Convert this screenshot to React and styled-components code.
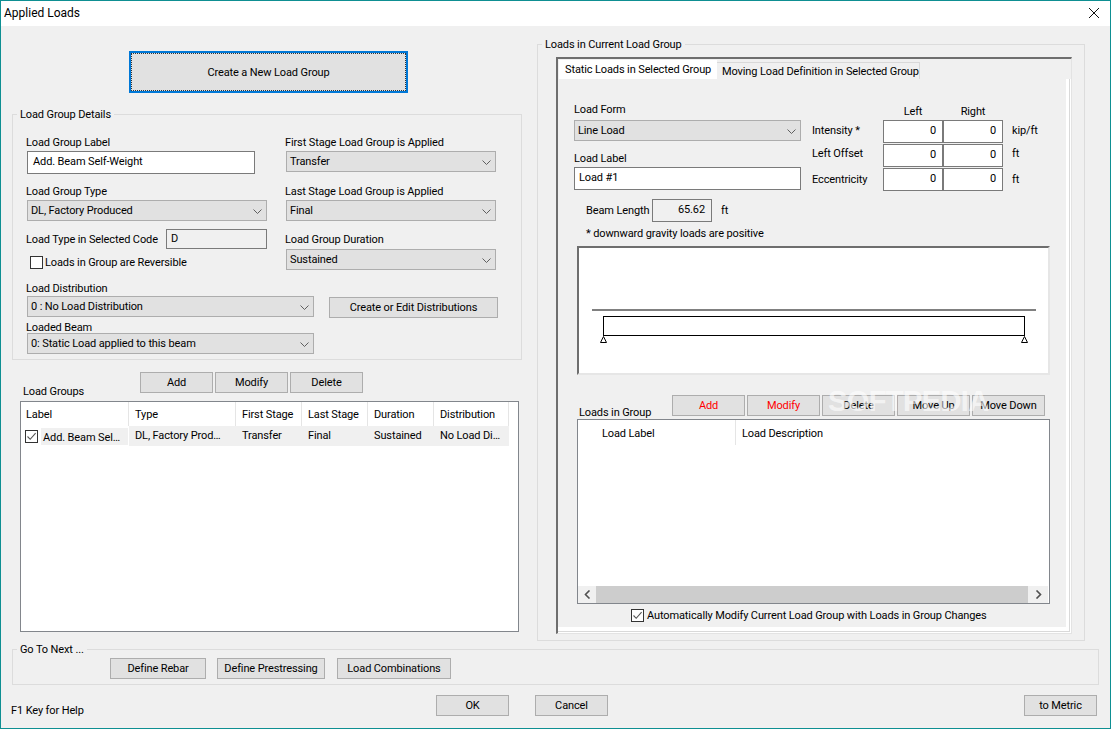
import React from 'react';
import styled, { createGlobalStyle } from 'styled-components';

const GlobalStyle = createGlobalStyle`
  html, body {
    margin: 0;
    padding: 0;
    background: #f0f0f0;
  }
  body {
    font-family: "Roboto", "Liberation Sans", sans-serif;
    font-size: 11px;
    letter-spacing: -0.12px;
    line-height: 18px;
    color: #000;
  }
`;

const Window = styled.div`
  box-sizing: border-box;
  width: 1111px;
  height: 729px;
  border: 1px solid #0e8f92;
  background: #f0f0f0;
  display: flex;
  flex-direction: column;
  overflow: hidden;
`;

const TitleBar = styled.div`
  height: 25px;
  flex: none;
  background: #fff;
  display: flex;
  align-items: center;
  justify-content: space-between;
  padding: 0 10px 1px 3px;
  box-sizing: border-box;
  font-size: 12px;
  letter-spacing: 0;
`;

const Main = styled.div`
  height: 615px;
  flex: none;
  display: flex;
  gap: 15px;
  padding-left: 11px;
`;

const LeftColumn = styled.div`
  width: 510px;
  padding-top: 25px;
  flex: none;
`;

const Group = styled.fieldset`
  box-sizing: border-box;
  margin: ${p => p.$margin || 0};
  padding: ${p => p.$padding || 0};
  width: ${p => p.$w}px;
  height: ${p => p.$h}px;
  border: 1px solid #dcdcdc;
  min-inline-size: 0;
`;

const GroupTitle = styled.legend`
  margin-left: ${p => p.$ml ?? 4}px;
  padding: 0 3px;
  height: 16px;
`;

const PushButton = styled.div`
  box-sizing: border-box;
  width: ${p => p.$w}px;
  height: ${p => p.$h || 21}px;
  flex: none;
  display: flex;
  align-items: center;
  justify-content: center;
  padding-top: 1px;
  background: #e1e1e1;
  border: 1px solid #adadad;
  color: ${p => p.$danger ? '#ff0000' : '#000'};
`;

const DefaultButton = styled(PushButton)`
  position: relative;
  margin-left: 117px;
  border: 2px solid #0078d7;
  outline: 1px dotted #333;
  outline-offset: -3px;
`;

const FieldLabel = styled.div`
  height: 16px;
  margin-top: ${p => p.$mt || 0}px;
  margin-bottom: ${p => p.$mb || 0}px;
  white-space: nowrap;
`;

const Dropdown = styled.div`
  box-sizing: border-box;
  width: ${p => p.$w}px;
  height: 21px;
  margin-left: ${p => p.$ml ?? 1}px;
  padding: 1px 4px 0 3px;
  display: flex;
  align-items: center;
  justify-content: space-between;
  background: #e1e1e1;
  border: 1px solid #adadad;
`;

const TextBox = styled.div`
  box-sizing: border-box;
  width: ${p => p.$w}px;
  height: ${p => p.$h || 23}px;
  margin-left: ${p => p.$ml ?? 0}px;
  padding: 0 ${p => p.$align === 'right' ? 6 : 4}px ${p => p.$pb ?? 2}px ${p => p.$pl ?? 4}px;
  display: flex;
  align-items: center;
  justify-content: ${p => p.$align === 'right' ? 'flex-end' : 'flex-start'};
  background: ${p => p.$readOnly ? '#f0f0f0' : '#fff'};
  border: 1px solid #7a7a7a;
  white-space: nowrap;
`;

const DetailsColumns = styled.div`
  display: flex;
  gap: 18px;
  padding-top: 12px;
`;

const DetailsColumn = styled.div`
  width: 241px;
  flex: none;
`;

const SideColumn = styled.div`
  width: 211px;
  flex: none;
`;

const CodeRow = styled.div`
  display: flex;
  align-items: center;
  justify-content: space-between;
  margin-top: 8px;
  height: 20px;
  white-space: nowrap;
`;

const InlineLabel = styled.span`
  padding-top: 2px;
`;

const CheckRow = styled.div`
  display: flex;
  align-items: center;
  gap: ${p => p.$gap ?? 2}px;
  height: 16px;
  margin: ${p => p.$margin || 0};
  white-space: nowrap;
`;

const CheckFrame = styled.span`
  box-sizing: border-box;
  width: 13px;
  height: 13px;
  flex: none;
  background: #fff;
  border: 1px solid #333;
  display: flex;
  align-items: center;
  justify-content: center;
`;

const DistributionRow = styled.div`
  display: flex;
  gap: 15px;
  margin-top: 10px;
`;

const DistributionColumn = styled.div`
  width: 288px;
  flex: none;
`;

const DistributionButton = styled(PushButton)`
  margin-top: 17px;
`;

const GroupsToolbar = styled.div`
  height: 29px;
  margin-top: 12px;
  display: flex;
`;

const ToolbarLabel = styled.div`
  width: ${p => p.$w}px;
  padding-left: ${p => p.$pl}px;
  box-sizing: border-box;
  flex: none;
  align-self: flex-end;
  margin-bottom: ${p => p.$mb}px;
  white-space: nowrap;
`;

const ButtonRow = styled.div`
  display: flex;
  gap: 2px;
  height: 21px;
`;

const ListBox = styled.div`
  box-sizing: border-box;
  width: ${p => p.$w}px;
  height: ${p => p.$h}px;
  margin-left: ${p => p.$ml}px;
  background: #fff;
  border: 1px solid #82868c;
  display: flex;
  flex-direction: column;
`;

const ListHeader = styled.div`
  display: grid;
  grid-template-columns: ${p => p.$cols};
  height: ${p => p.$h || 24}px;
  flex: none;
`;

const HeaderCell = styled.div`
  padding: ${p => p.$pt ?? 4}px 0 0 ${p => p.$pl ?? 6}px;
  border-right: ${p => p.$last ? 0 : '1px solid #e5e5e5'};
  white-space: nowrap;
`;

const ListRow = styled.div`
  display: grid;
  grid-template-columns: 108px 107px 66px 66px 66px 75px;
  height: 17px;
  line-height: 20px;
`;

const RowCell = styled.div`
  background: #f0f0f0;
  padding-left: 6px;
  white-space: nowrap;
`;

const FirstCell = styled.div`
  display: flex;
  align-items: center;
  padding-left: 4px;
`;

const RowName = styled.div`
  width: 87px;
  height: 17px;
  margin-left: 3px;
  padding-left: 2px;
  box-sizing: border-box;
  background: #f0f0f0;
  white-space: nowrap;
`;

const LoadsGroup = styled(Group)`
  flex: none;
  margin-top: 10px;
`;

const TabFrame = styled.div`
  box-sizing: border-box;
  width: 516px;
  height: 577px;
  margin-left: 18px;
  border-top: 2px solid #6e6e6e;
  border-left: 2px solid #6e6e6e;
  border-right: 1px solid #e3e3e3;
  border-bottom: 1px solid #e3e3e3;
  display: flex;
  flex-direction: column;
`;

const TabStrip = styled.div`
  height: 20px;
  flex: none;
  display: flex;
  align-items: flex-end;
  padding-left: 1px;
`;

const Tab = styled.div`
  box-sizing: border-box;
  width: ${p => p.$w}px;
  height: ${p => p.$active ? 19 : 17}px;
  padding-left: ${p => p.$active ? 6 : 5}px;
  background: ${p => p.$active ? '#fff' : '#f0f0f0'};
  border: ${p => p.$active ? 0 : '1px solid #d9d9d9'};
  border-bottom: 0;
  border-left: 0;
  line-height: ${p => p.$active ? 19 : 17}px;
  white-space: nowrap;
`;

const PageBackdrop = styled.div`
  flex: 1;
  background: #fff;
  padding: 0 1px 1px 0;
`;

const PageEdge = styled.div`
  box-sizing: border-box;
  height: 100%;
  border-right: 1px solid #d9d9d9;
  border-bottom: 1px solid #d9d9d9;
`;

const Page = styled.div`
  box-sizing: border-box;
  height: 100%;
  background: #f0f0f0;
  border-right: 3px solid #fff;
  border-bottom: 4px solid #fff;
  padding: 22px 0 0 16px;
`;

const FormArea = styled.div`
  display: flex;
  gap: 11px;
  height: 89px;
`;

const FormColumn = styled.div`
  width: 227px;
  flex: none;
`;

const ValueGrid = styled.div`
  display: grid;
  grid-template-columns: 71px 60px 60px auto;
  grid-template-rows: 18px 23px 23px 23px;
  row-gap: 1px;
  align-items: center;
`;

const ColumnHead = styled.div`
  text-align: center;
  height: 16px;
  padding-top: 2px;
`;

const RowLabel = styled.div`
  padding-bottom: ${p => p.$lift || 0}px;
  white-space: nowrap;
`;

const UnitLabel = styled(RowLabel)`
  padding-left: 9px;
`;

const LengthRow = styled.div`
  display: flex;
  align-items: center;
  margin: 9px 0 0 12px;
  height: 23px;
`;

const LengthLabel = styled.div`
  width: 66px;
  flex: none;
  white-space: nowrap;
`;

const Note = styled.div`
  height: 16px;
  margin: 3px 0 0 12px;
`;

const BeamCanvas = styled.div`
  box-sizing: border-box;
  width: 473px;
  height: 129px;
  margin: 5px 0 0 3px;
  background: #fff;
  border-top: 2px solid #6e6e6e;
  border-left: 2px solid #6e6e6e;
  border-right: 2px solid #e6e6e6;
  border-bottom: 2px solid #e6e6e6;
`;

const BeamDrawing = styled.svg`
  display: block;
  width: 469px;
  height: 125px;
`;

const LoadsToolbar = styled.div`
  position: relative;
  display: flex;
  height: 24px;
  margin: 20px 0 0 3px;
`;

const Watermark = styled.div`
  position: absolute;
  left: 251px;
  top: -10px;
  font-family: "Liberation Sans", sans-serif;
  font-size: 29px;
  font-weight: 700;
  line-height: 32px;
  letter-spacing: -0.6px;
  color: rgba(255, 255, 255, 0.62);
  pointer-events: none;
  white-space: nowrap;
`;

const ListSpacer = styled.div`
  flex: 1;
`;

const ScrollBar = styled.div`
  height: 17px;
  margin: 0 1px 0 0;
  flex: none;
  background: #f0f0f0;
  display: flex;
  align-items: center;
`;

const ScrollArrow = styled.div`
  width: ${p => p.$w}px;
  height: 100%;
  flex: none;
  display: flex;
  align-items: center;
  justify-content: center;
`;

const ScrollThumb = styled.div`
  flex: 1;
  height: 100%;
  background: #cdcdcd;
`;

const NextGroup = styled(Group)`
  flex: none;
  margin-left: 11px;
`;

const NextButtons = styled.div`
  display: flex;
  padding-left: 97px;
  margin-top: 1px;
`;

const NextButton = styled(PushButton)`
  margin-right: ${p => p.$mr || 0}px;
`;

const Footer = styled.div`
  display: flex;
  margin-top: 10px;
  padding: 0 13px 0 10px;
`;

const HelpText = styled.div`
  width: 425px;
  flex: none;
  align-self: flex-end;
  margin-bottom: -4px;
`;

const CancelButton = styled(PushButton)`
  margin: 0 auto 0 26px;
`;

const Chevron = () => (
  <svg width="9" height="5" viewBox="0 0 9 5" fill="none">
    <path d="M0.5 0.5 L4.5 4.5 L8.5 0.5" stroke="#5f5f5f" strokeWidth="1" />
  </svg>
);

const CheckMark = () => (
  <svg width="11" height="11" viewBox="0 0 11 11" fill="none">
    <path d="M1.5 5.5 L4.2 8.3 L9.6 2.2" stroke="#555" strokeWidth="1.1" />
  </svg>
);

const Select = ({ w, ml, children }) => (
  <Dropdown $w={w} $ml={ml}>
    <span>{children}</span>
    <Chevron />
  </Dropdown>
);

const groupColumns = '108px 107px 66px 66px 66px 75px';
const groupHeads = ['Label', 'Type', 'First Stage', 'Last Stage', 'Duration', 'Distribution'];
const groupRow = ['DL, Factory Prod…', 'Transfer', 'Final', 'Sustained', 'No Load Di…'];

const valueRows = [
  { label: 'Intensity *', unit: 'kip/ft', lift: 1 },
  { label: 'Left Offset', unit: 'ft', lift: 4 },
  { label: 'Eccentricity', unit: 'ft', lift: 0 },
];

const loadButtons = [
  { name: 'Add', danger: true },
  { name: 'Modify', danger: true },
  { name: 'Delete' },
  { name: 'Move Up' },
  { name: 'Move Down' },
];

export default function App() {
  return (
    <>
      <GlobalStyle />
      <Window>
        <TitleBar>
          <span>Applied Loads</span>
          <svg width="12" height="12" viewBox="0 0 12 12" fill="none">
            <path d="M1 1 L11 11 M11 1 L1 11" stroke="#111" strokeWidth="1" />
          </svg>
        </TitleBar>

        <Main>
          <LeftColumn>
            <DefaultButton $w={279} $h={42}>Create a New Load Group</DefaultButton>

            <Group $w={510} $h={254} $margin="13px 0 0" $padding="0 13px">
              <GroupTitle $ml={-9}>Load Group Details</GroupTitle>
              <DetailsColumns>
                <DetailsColumn>
                  <FieldLabel $mb={1}>Load Group Label</FieldLabel>
                  <TextBox $w={228} $ml={1} $pl={5}>Add. Beam Self-Weight</TextBox>
                  <FieldLabel $mt={9} $mb={1}>Load Group Type</FieldLabel>
                  <Select w={240}>DL, Factory Produced</Select>
                  <CodeRow>
                    <InlineLabel>Load Type in Selected Code</InlineLabel>
                    <TextBox $w={101} $h={20} $pb={0} $readOnly>D</TextBox>
                  </CodeRow>
                  <CheckRow $margin="5px 0 0 4px">
                    <CheckFrame />
                    <InlineLabel>Loads in Group are Reversible</InlineLabel>
                  </CheckRow>
                </DetailsColumn>
                <SideColumn>
                  <FieldLabel $mb={1}>First Stage Load Group is Applied</FieldLabel>
                  <Select w={210}>Transfer</Select>
                  <FieldLabel $mt={11} $mb={1}>Last Stage Load Group is Applied</FieldLabel>
                  <Select w={210}>Final</Select>
                  <FieldLabel $mt={10} $mb={2}>Load Group Duration</FieldLabel>
                  <Select w={210}>Sustained</Select>
                </SideColumn>
              </DetailsColumns>
              <DistributionRow>
                <DistributionColumn>
                  <FieldLabel>Load Distribution</FieldLabel>
                  <Select w={287}>0 : No Load Distribution</Select>
                  <FieldLabel $mt={2} $mb={-2}>Loaded Beam</FieldLabel>
                  <Select w={287}>0: Static Load applied to this beam</Select>
                </DistributionColumn>
                <DistributionButton $w={169}>Create or Edit Distributions</DistributionButton>
              </DistributionRow>
            </Group>

            <GroupsToolbar>
              <ToolbarLabel $w={128} $pl={11} $mb={0}>Load Groups</ToolbarLabel>
              <ButtonRow>
                <PushButton $w={73}>Add</PushButton>
                <PushButton $w={73}>Modify</PushButton>
                <PushButton $w={73}>Delete</PushButton>
              </ButtonRow>
            </GroupsToolbar>

            <ListBox $w={499} $h={231} $ml={8}>
              <ListHeader $cols={groupColumns}>
                {groupHeads.map((head, i) => (
                  <HeaderCell key={head} $pl={i === 0 ? 5 : 6}>{head}</HeaderCell>
                ))}
              </ListHeader>
              <ListRow>
                <FirstCell>
                  <CheckFrame><CheckMark /></CheckFrame>
                  <RowName>Add. Beam Sel…</RowName>
                </FirstCell>
                {groupRow.map(text => <RowCell key={text}>{text}</RowCell>)}
              </ListRow>
            </ListBox>
          </LeftColumn>

          <LoadsGroup $w={548} $h={605} $padding="5px 0 0">
            <GroupTitle>Loads in Current Load Group</GroupTitle>
            <TabFrame>
              <TabStrip>
                <Tab $active $w={158}>Static Loads in Selected Group</Tab>
                <Tab $w={203}>Moving Load Definition in Selected Group</Tab>
              </TabStrip>
              <PageBackdrop>
                <PageEdge>
                  <Page>
                    <FormArea>
                      <FormColumn>
                        <FieldLabel $mb={3}>Load Form</FieldLabel>
                        <Select w={227} ml={0}>Line Load</Select>
                        <FieldLabel $mt={9} $mb={1}>Load Label</FieldLabel>
                        <TextBox $w={227}>Load #1</TextBox>
                      </FormColumn>
                      <ValueGrid>
                        <span />
                        <ColumnHead>Left</ColumnHead>
                        <ColumnHead>Right</ColumnHead>
                        <span />
                        {valueRows.map(row => (
                          <React.Fragment key={row.label}>
                            <RowLabel $lift={row.lift}>{row.label}</RowLabel>
                            <TextBox $w={60} $align="right">0</TextBox>
                            <TextBox $w={60} $align="right">0</TextBox>
                            <UnitLabel $lift={row.lift}>{row.unit}</UnitLabel>
                          </React.Fragment>
                        ))}
                      </ValueGrid>
                    </FormArea>

                    <LengthRow>
                      <LengthLabel>Beam Length</LengthLabel>
                      <TextBox $w={60} $align="right" $readOnly>65.62</TextBox>
                      <UnitLabel>ft</UnitLabel>
                    </LengthRow>
                    <Note>* downward gravity loads are positive</Note>

                    <BeamCanvas>
                      <BeamDrawing viewBox="0 0 469 125">
                        <path d="M13 62 H457" stroke="#808080" strokeWidth="2" fill="none" />
                        <rect x="24.5" y="68.5" width="421" height="19" fill="#fff" stroke="#000" />
                        <path d="M24.5 88.5 L21.5 94.5 H27.5 Z" fill="#fff" stroke="#000" />
                        <path d="M445.5 88.5 L442.5 94.5 H448.5 Z" fill="#fff" stroke="#000" />
                      </BeamDrawing>
                    </BeamCanvas>

                    <LoadsToolbar>
                      <ToolbarLabel $w={95} $pl={2} $mb={-3}>Loads in Group</ToolbarLabel>
                      <ButtonRow>
                        {loadButtons.map(button => (
                          <PushButton key={button.name} $w={73} $danger={button.danger}>{button.name}</PushButton>
                        ))}
                      </ButtonRow>
                      <Watermark>SOFTPEDIA</Watermark>
                    </LoadsToolbar>

                    <ListBox $w={473} $h={185} $ml={3}>
                      <ListHeader $cols="158px 314px" $h={25}>
                        <HeaderCell $pl={24} $pt={5}>Load Label</HeaderCell>
                        <HeaderCell $pt={5} $last>Load Description</HeaderCell>
                      </ListHeader>
                      <ListSpacer />
                      <ScrollBar>
                        <ScrollArrow $w={18}>
                          <svg width="7" height="9" viewBox="0 0 7 9" fill="none">
                            <path d="M5.5 0.5 L1.5 4.5 L5.5 8.5" stroke="#505050" strokeWidth="1.6" />
                          </svg>
                        </ScrollArrow>
                        <ScrollThumb />
                        <ScrollArrow $w={20}>
                          <svg width="7" height="9" viewBox="0 0 7 9" fill="none">
                            <path d="M1.5 0.5 L5.5 4.5 L1.5 8.5" stroke="#505050" strokeWidth="1.6" />
                          </svg>
                        </ScrollArrow>
                      </ScrollBar>
                    </ListBox>

                    <CheckRow $gap={3} $margin="3px 0 0 57px">
                      <CheckFrame><CheckMark /></CheckFrame>
                      <InlineLabel>Automatically Modify Current Load Group with Loads in Group Changes</InlineLabel>
                    </CheckRow>
                  </Page>
                </PageEdge>
              </PageBackdrop>
            </TabFrame>
          </LoadsGroup>
        </Main>

        <NextGroup $w={1087} $h={44}>
          <GroupTitle>Go To Next ...</GroupTitle>
          <NextButtons>
            <NextButton $w={96} $mr={11}>Define Rebar</NextButton>
            <NextButton $w={108} $mr={12}>Define Prestressing</NextButton>
            <NextButton $w={114}>Load Combinations</NextButton>
          </NextButtons>
        </NextGroup>

        <Footer>
          <HelpText>F1 Key for Help</HelpText>
          <PushButton $w={73}>OK</PushButton>
          <CancelButton $w={73}>Cancel</CancelButton>
          <PushButton $w={73}>to Metric</PushButton>
        </Footer>
      </Window>
    </>
  );
}
